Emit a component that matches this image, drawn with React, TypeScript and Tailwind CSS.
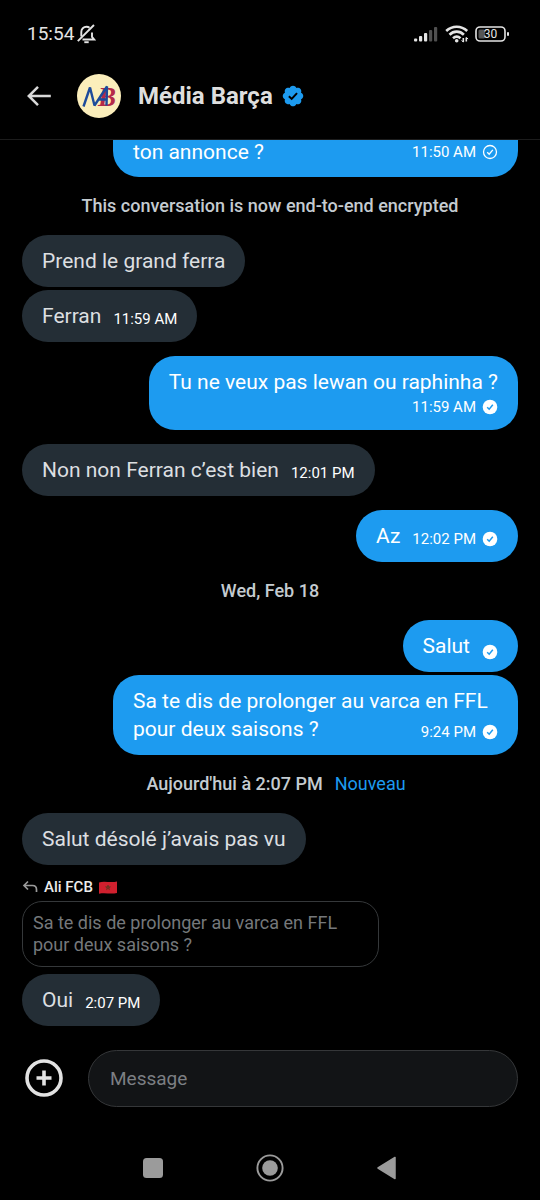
import React from "react";

const sans = "font-['Roboto','Liberation_Sans',sans-serif]";

interface MessageProps {
  text: string;
  lead?: string;
  mine?: boolean;
  time?: string;
  status?: "sent" | "read";
  layout?: "inline" | "below" | "wide" | "cut";
  className?: string;
}

const CheckIcon = ({ status }: { status: "sent" | "read" }) => (
  <svg
    viewBox="0 0 16 16"
    className="w-4 h-4 shrink-0"
    role="img"
    aria-label={status}
  >
    {status === "read" ? (
      <>
        <circle cx="8" cy="8" r="7.3" fill="#fff" />
        <path
          d="M5.2 8.2l2 2 3.6-4.4"
          fill="none"
          stroke="#1d9bf0"
          strokeWidth="1.5"
        />
      </>
    ) : (
      <>
        <circle cx="8" cy="8" r="6.5" fill="none" stroke="#fff" strokeWidth="1.3" />
        <path
          d="M5.2 8.2l2 2 3.6-4.4"
          fill="none"
          stroke="#fff"
          strokeWidth="1.3"
        />
      </>
    )}
  </svg>
);

const Message = ({
  text,
  lead,
  mine,
  time,
  status,
  layout = "inline",
  className = "",
}: MessageProps) => {
  const side = mine
    ? "self-end bg-[#1d9bf0] text-white"
    : "self-start bg-[#242e36] text-[#dcdfe1]";
  const meta = (time || status) && (
    <span className="inline-flex items-center gap-1.5 text-[15px] leading-[22px] text-white whitespace-nowrap">
      {time}
      {status && <CheckIcon status={status} />}
    </span>
  );

  // bubble whose top has scrolled under the header
  if (layout === "cut") {
    return (
      <div
        className={`flex justify-between items-end w-[75vw] px-5 pt-px pb-3.5 rounded-b-[26px] text-[21px] leading-[22px] ${side} ${className}`}
      >
        <span>{text}</span>
        {meta}
      </div>
    );
  }

  // time sits at the end of the last line
  if (layout === "wide") {
    return (
      <div
        className={`w-[75vw] px-5 py-3 rounded-[26px] text-[21px] leading-7 ${side} ${className}`}
      >
        <div>{lead}</div>
        <div className="flex justify-between items-end">
          <span>{text}</span>
          {meta}
        </div>
      </div>
    );
  }

  if (layout === "below") {
    return (
      <div
        className={`flex flex-col max-w-[75vw] px-5 py-3 rounded-[26px] text-[21px] leading-7 ${side} ${className}`}
      >
        <span>{text}</span>
        <span className="flex justify-end">{meta}</span>
      </div>
    );
  }

  return (
    <div
      className={`flex items-end gap-3 max-w-[75vw] px-5 py-3 rounded-[26px] text-[21px] leading-7 ${side} ${className}`}
    >
      <span>{text}</span>
      {meta}
    </div>
  );
};

const Notice = ({ children }: { children: React.ReactNode }) => (
  <p className="mt-3.5 text-center text-lg leading-[30px] font-medium text-[#c4cbd0]">
    {children}
  </p>
);

const StatusBar = () => (
  <div className="flex items-center justify-between h-[67px] pl-[27px] pr-[30px] text-[#e4e4e4]">
    <div className="flex items-center gap-0.5">
      <span className="text-[19px] leading-6">15:54</span>
      <svg viewBox="0 0 20 20" className="w-5 h-5" fill="none" stroke="currentColor" strokeWidth="1.9">
        <path d="M6.500 15.500H18.200L16 12.800V8.500M5.300 12.500V8C5.300 5 7.500 2.800 10.500 2.800c1.300 0 2.200.3 3 1" />
        <path d="M18 1L1.800 17.200" />
        <path d="M8.300 18.200h4.400" />
      </svg>
    </div>
    <div className="flex items-center gap-1.5">
      <svg viewBox="0 0 26 16" className="w-[26px] h-4" fill="currentColor">
        <rect x="1" y="12.500" width="3.200" height="3" rx="1" />
        <rect x="6" y="10" width="3.200" height="5.500" rx="1" />
        <rect x="11" y="7" width="3.200" height="8.500" rx="1" />
        <rect x="16" y="4" width="3.200" height="11.500" rx="1" opacity=".35" />
        <rect x="21" y="1" width="3.200" height="14.500" rx="1" opacity=".35" />
      </svg>
      <svg viewBox="0 0 24 18" className="w-6 h-[18px]" fill="none" stroke="currentColor" strokeWidth="2.600">
        <path d="M1.200 6C7.200.4 16.200.4 22.200 6" />
        <path d="M4.500 9.700C8.700 5.600 14.700 5.600 18.900 9.700" />
        <path d="M8 13.200C10.300 11.200 13.200 11.200 15.500 13.200" />
        <circle cx="11.700" cy="15.800" r="1.800" fill="currentColor" stroke="none" />
        <path d="M18.300 13v4M21.300 12.500v4" strokeWidth="1.600" />
        <path d="M16.500 15.500l1.800 1.500M21.300 12.500l1.800 1.500" strokeWidth="1" />
      </svg>
      <svg viewBox="0 0 35 16" className="w-[35px] h-4" role="img" aria-label="30">
        <rect x="3.500" y="3.500" width="6.500" height="9" rx="1.500" fill="#555" />
        <rect x="1" y="1" width="29" height="14" rx="4" fill="none" stroke="currentColor" strokeWidth="1.600" />
        <rect x="32" y="6" width="2" height="4" rx="1" fill="currentColor" />
        <text x="15.500" y="12.200" textAnchor="middle" fontFamily="Roboto" fontSize="12" fill="currentColor">
          30
        </text>
      </svg>
    </div>
  </div>
);

const Header = () => (
  <header className="flex items-center h-[73px] px-6 pb-3.5 border-b border-[#1c1c1c]">
    <button type="button" aria-label="Retour" className="text-[#d9d9d9]">
      <svg viewBox="0 0 30 30" className="w-[30px] h-[30px]" fill="none" stroke="currentColor" strokeWidth="2.500">
        <path d="M26.800 15H4.500M14 5.800L4.800 15l9.200 9.200" />
      </svg>
    </button>
    <svg viewBox="0 0 44 44" className="w-11 h-11 ml-[23px]" role="img" aria-label="MB">
      <circle cx="22" cy="22" r="22" fill="#fbeebb" />
      <text x="21" y="32" fontFamily="Liberation Serif" fontWeight="700" fontStyle="italic" fontSize="27" fill="#b52a48">B</text>
      <path
        d="M6.500 32.500L13 13.500L17.500 31.500L30 12.500L29.500 31.500M21.500 25.500H30"
        fill="none"
        stroke="#1e4b9b"
        strokeWidth="2.400"
        strokeLinejoin="bevel"
      />
    </svg>
    <h1 className="ml-[17px] text-2xl font-bold text-[#dedede]">Média Barça</h1>
    <svg viewBox="0 0 22 22" className="w-6 h-6 ml-2" role="img" aria-label="Compte certifié">
      <path
        fill="#1d9bf0"
        d="M20.396 11c-.018-.646-.215-1.275-.57-1.816-.354-.540-.852-.972-1.438-1.246.223-.607.270-1.264.140-1.897-.131-.634-.437-1.218-.882-1.687-.470-.445-1.053-.750-1.687-.882-.633-.130-1.290-.083-1.897.140-.273-.587-.704-1.086-1.245-1.440S11.647 1.620 11 1.604c-.646.017-1.273.213-1.813.568s-.969.854-1.240 1.440c-.608-.223-1.267-.272-1.902-.140-.635.130-1.220.436-1.690.882-.445.470-.749 1.055-.878 1.688-.130.633-.080 1.290.144 1.896-.587.274-1.087.705-1.443 1.245-.356.540-.555 1.170-.574 1.817.020.647.218 1.276.574 1.817.356.540.856.972 1.443 1.245-.224.606-.274 1.263-.144 1.896.130.634.433 1.218.877 1.688.470.443 1.054.747 1.687.878.633.132 1.290.084 1.897-.136.274.586.705 1.084 1.246 1.439.540.354 1.170.551 1.816.569.647-.016 1.276-.213 1.817-.567s.972-.854 1.245-1.440c.604.239 1.266.296 1.903.164.636-.132 1.220-.447 1.680-.907.460-.460.776-1.044.908-1.681s.075-1.299-.165-1.903c.586-.274 1.084-.705 1.439-1.246.354-.540.551-1.170.569-1.816z"
      />
      <path d="M7.200 11.200l2.600 2.500 4.900-5.400" fill="none" stroke="#000" strokeWidth="1.800" />
    </svg>
  </header>
);

const Quote = () => (
  <div className="flex flex-col items-start mt-3.5">
    <div className="flex items-center gap-1.5 text-[15px] leading-4 font-medium text-[#ececec]">
      <svg viewBox="0 0 16 16" className="w-4 h-4" fill="none" stroke="#9a9a9a" strokeWidth="1.700">
        <path d="M6 2.500L2 6.500l4 4M2 6.500h8.500c2.500 0 4 1.500 4 4V13" />
      </svg>
      <span>Ali FCB</span>
      <svg viewBox="0 0 18 13" className="w-[18px] h-[13px]" role="img" aria-label="Maroc">
        <path d="M0 1.500C5-.5 11 2 18 .5V12c-6 1.500-12-.5-18 .8z" fill="#d0202e" />
        <path d="M9 4l1.500 4.600-3.900-2.800h4.800L7.500 8.600z" fill="none" stroke="#5a3a20" strokeWidth=".7" />
      </svg>
    </div>
    <p className="mt-1.5 w-[72%] p-2.5 border border-[#35383a] rounded-[20px] text-lg leading-[22px] text-[#75787b]">
      Sa te dis de prolonger au varca en FFL pour deux saisons ?
    </p>
  </div>
);

const Composer = () => (
  <form className="flex items-center gap-6 pt-6 pr-[22px] pl-6">
    <button type="button" aria-label="Ajouter" className="shrink-0 -mt-0.5">
      <svg viewBox="0 0 40 40" className="w-10 h-10" fill="none" stroke="#e2e2e2">
        <circle cx="20" cy="20" r="17" strokeWidth="3.600" />
        <path d="M20 12.500v15M12.500 20h15" strokeWidth="3.600" />
      </svg>
    </button>
    <input
      type="text"
      aria-label="Message"
      placeholder="Message"
      className="flex-1 min-w-0 h-[57px] px-[21px] rounded-full border border-[#353739] bg-[#121416] text-[19px] text-white placeholder:text-[#7c7f83]"
    />
  </form>
);

const NavBar = () => (
  <nav className="flex items-center justify-center gap-[89px] h-[93px] pt-7 text-[#9b9b9b]">
    <button type="button" aria-label="Applications récentes">
      <svg viewBox="0 0 28 28" className="w-7 h-7" fill="currentColor">
        <rect x="4" y="4" width="20" height="20" rx="3.500" />
      </svg>
    </button>
    <button type="button" aria-label="Accueil">
      <svg viewBox="0 0 28 28" className="w-7 h-7">
        <circle cx="14" cy="14" r="12.600" fill="none" stroke="currentColor" strokeWidth="1.900" />
        <circle cx="14" cy="14" r="7.800" fill="currentColor" />
      </svg>
    </button>
    <button type="button" aria-label="Précédent">
      <svg viewBox="0 0 28 28" className="w-7 h-7" fill="currentColor" stroke="currentColor" strokeWidth="1.500" strokeLinejoin="round">
        <path d="M5 14L22 3.500v21z" />
      </svg>
    </button>
  </nav>
);

const App = () => {
  return (
    <div className={`flex flex-col h-screen bg-black ${sans}`}>
      <StatusBar />
      <Header />
      <main className="flex overflow-hidden flex-col flex-1 justify-end px-[22px] min-h-0">
        <Message text="ton annonce ?" mine time="11:50 AM" status="sent" layout="cut" />
        <Notice>This conversation is now end-to-end encrypted</Notice>
        <Message text="Prend le grand ferra" className="mt-3.5" />
        <Message text="Ferran" time="11:59 AM" className="mt-[3px]" />
        <Message
          text="Tu ne veux pas lewan ou raphinha ?"
          mine
          time="11:59 AM"
          status="read"
          layout="below"
          className="mt-3.5"
        />
        <Message text="Non non Ferran c’est bien" time="12:01 PM" className="mt-3.5" />
        <Message text="Az" mine time="12:02 PM" status="read" className="mt-3.5" />
        <Notice>Wed, Feb 18</Notice>
        <Message text="Salut" mine status="read" className="mt-3.5" />
        <Message
          lead="Sa te dis de prolonger au varca en FFL"
          text="pour deux saisons ?"
          mine
          time="9:24 PM"
          status="read"
          layout="wide"
          className="mt-[3px]"
        />
        <Notice>
          <span className="ml-3">Aujourd'hui à 2:07 PM</span>
          <span className="ml-3 font-normal text-[#1d9bf0]">Nouveau</span>
        </Notice>
        <Message text="Salut désolé j’avais pas vu" className="mt-3.5" />
        <Quote />
        <Message text="Oui" time="2:07 PM" className="mt-[7px]" />
      </main>
      <Composer />
      <NavBar />
    </div>
  );
};

export default App;
